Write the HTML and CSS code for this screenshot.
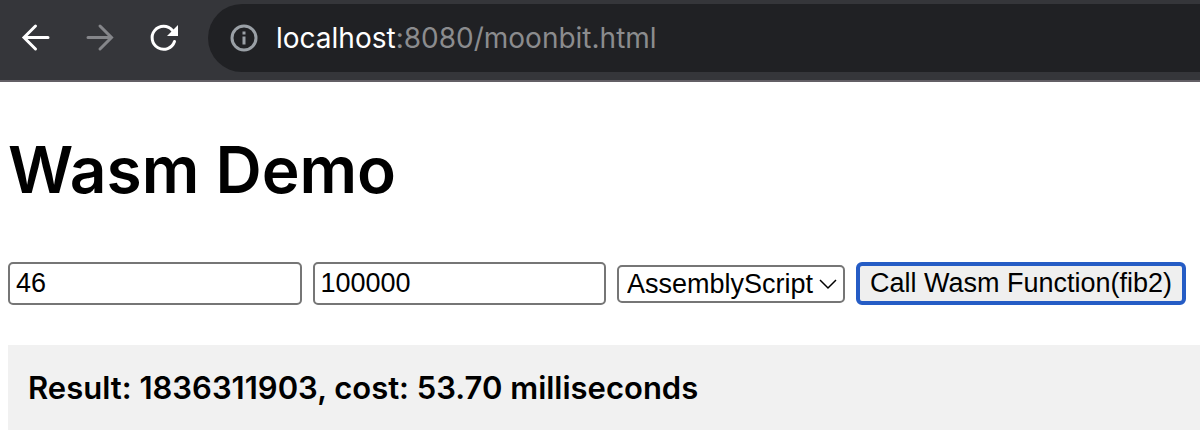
FILE: index.html
```html
<!DOCTYPE html>
<html lang="en">
<head>
<meta charset="utf-8">
<title>Wasm Demo</title>
<link rel="stylesheet" href="styles.css">
</head>
<body>
<header class="toolbar">
  <nav class="nav" aria-label="Browser navigation">
    <button class="nav-button" type="button" aria-label="Back">
      <svg class="icon" viewBox="0 0 32 32"><path d="M28 15.500H4.500M15.500 4L4 15.500L15.500 27"/></svg>
    </button>
    <button class="nav-button nav-button-off" type="button" aria-label="Forward" disabled>
      <svg class="icon" viewBox="0 0 32 32"><path d="M4 15.500H27M16 4L27.500 15.500L16 27"/></svg>
    </button>
    <button class="nav-button" type="button" aria-label="Reload">
      <svg class="icon" viewBox="0 0 32 32"><path d="M26.500 19.500A11.500 11.500 0 1 1 24.500 8.500"/><path class="tip" d="M30 3V14H19Z"/></svg>
    </button>
  </nav>
  <div class="address">
    <svg class="info" viewBox="0 0 28 28" aria-hidden="true"><circle cx="14" cy="14" r="12"/><path d="M14 12.500V20.500M14 7.500V10.500"/></svg>
    <span class="url"><span class="host">localhost</span>:8080/moonbit.html</span>
  </div>
</header>
<main class="page">
  <h1 class="title">Wasm Demo</h1>
  <form class="controls">
    <input class="field" type="text" value="46" aria-label="Number">
    <input class="field" type="text" value="100000" aria-label="Iterations">
    <span class="select-wrap">
      <select class="language" aria-label="Language"><option>AssemblyScript</option></select>
      <svg class="chevron" viewBox="0 0 18 12" aria-hidden="true"><path d="M1 2L9 10L17 2"/></svg>
    </span>
    <button class="call" type="button">Call Wasm Function(fib2)</button>
  </form>
  <output class="result">Result: 1836311903, cost: 53.70 milliseconds</output>
</main>
</body>
</html>
```
FILE: styles.css
```css
* { box-sizing: border-box; }
body { margin: 0; background: #fff; color: #000; font-family: "Liberation Sans", Arial, sans-serif; }
.toolbar { display: flex; align-items: center; gap: 28px; height: 82px; padding: 0 0 4px 20px; background: #35363a; border-bottom: 2px solid #635f65; }
.nav { display: flex; gap: 32px; }
.nav-button { width: 32px; height: 32px; padding: 0; border: 0; background: none; color: #fff; }
.nav-button-off { color: #85868a; }
.icon { display: block; width: 32px; height: 32px; fill: none; stroke: currentColor; stroke-width: 3; stroke-linecap: round; }
.nav-button-off .icon { color: #85868a; }
.tip { fill: currentColor; stroke: none; }
.address { display: flex; flex: 1; align-items: center; gap: 18px; height: 68px; padding-left: 22px; border-radius: 34px 0 0 34px; background: #202124; }
.info { width: 28px; height: 28px; fill: none; stroke: #9aa0a6; stroke-width: 3; }
.url { color: #8b8c8e; font-family: Inter, sans-serif; font-size: 28px; }
.host { color: #fff; }
.page { padding: 52px 0 0 8px; }
.title { margin: 0; font-family: Inter, sans-serif; font-size: 64px; font-weight: 600; line-height: 72px; }
.controls { display: flex; align-items: center; gap: 11px; margin-top: 56px; padding-right: 14px; }
.field { flex: 1 1 0; min-width: 0; height: 43px; padding: 0 6px; border: 2px solid #767676; border-radius: 5px; background: #fff; color: #000; font: 27px "Liberation Sans", Arial, sans-serif; }
.select-wrap { position: relative; flex: none; }
.language { display: block; width: 228px; height: 38px; padding: 0 8px; appearance: none; border: 2px solid #767676; border-radius: 5px; background: #fff; color: #000; font: 27px "Liberation Sans", Arial, sans-serif; }
.chevron { position: absolute; top: 13px; right: 8px; width: 18px; height: 12px; fill: none; stroke: #000; stroke-width: 1.5; pointer-events: none; }
.call { flex: none; width: 330px; height: 43px; padding: 0; border: 4px solid #255cc5; border-radius: 6px; background: #efefef; color: #000; font: 27px "Liberation Sans", Arial, sans-serif; }
.result { display: block; margin-top: 40px; padding: 20px; background: #f1f1f1; font: 600 31px/45px Inter, sans-serif; }
```
